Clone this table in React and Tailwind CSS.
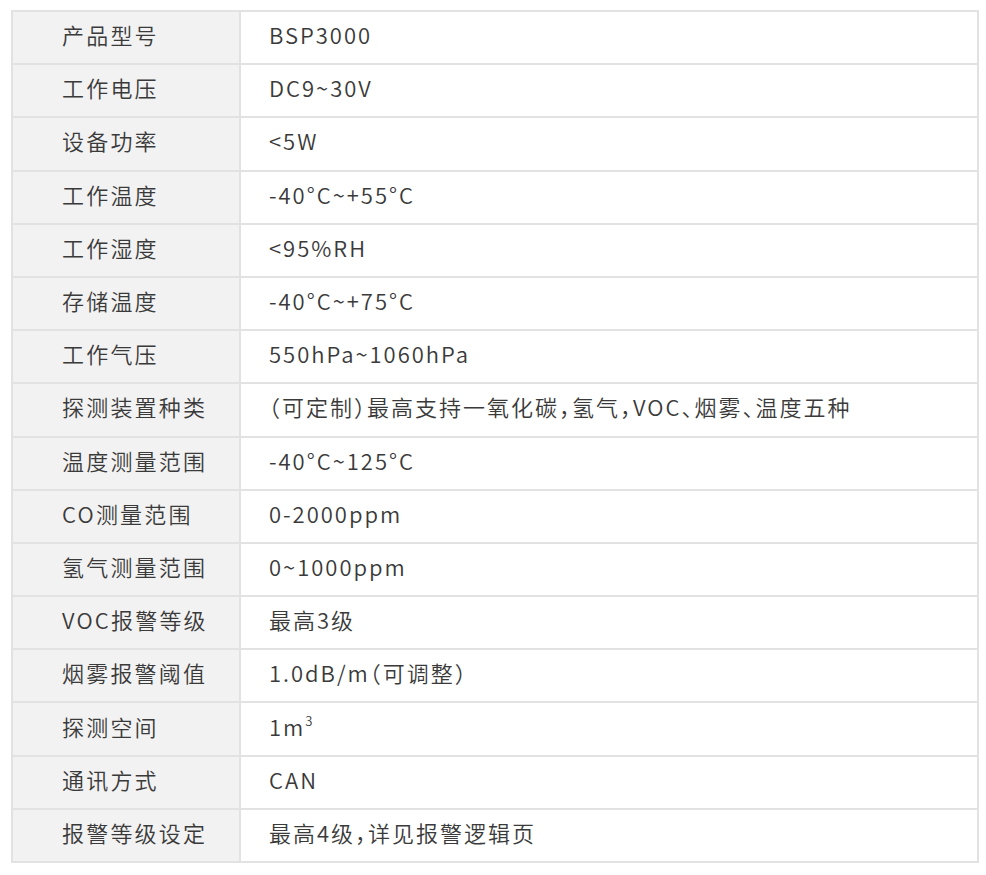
import React from 'react';

const rows = [
  ['产品型号', 'BSP3000'],
  ['工作电压', 'DC9~30V'],
  ['设备功率', '<5W'],
  ['工作温度', '-40°C~+55°C'],
  ['工作湿度', '<95%RH'],
  ['存储温度', '-40°C~+75°C'],
  ['工作气压', '550hPa~1060hPa'],
  ['探测装置种类', '（可定制）最高支持一氧化碳，氢气，VOC、烟雾、温度五种'],
  ['温度测量范围', '-40°C~125°C'],
  ['CO测量范围', '0-2000ppm'],
  ['氢气测量范围', '0~1000ppm'],
  ['VOC报警等级', '最高3级'],
  ['烟雾报警阈值', '1.0dB/m（可调整）'],
  ['探测空间', 'm3'],
  ['通讯方式', 'CAN'],
  ['报警等级设定', '最高4级，详见报警逻辑页'],
];

const App = () => {
  return (
    <div className="bg-white w-[986px] h-[875px] pt-[10px] pl-[11px] [font-feature-settings:'halt']" style={{ fontFamily: '"Noto Sans CJK SC", "Noto Sans", sans-serif' }}>
      <div className="w-[968px] border-2 border-[#e2e2e2] border-b-0">
        {rows.map(([k, v]) => (
          <div key={k} className="flex h-[53.2px] border-b-2 border-[#e2e2e2]">
            <div className="w-[228px] shrink-0 bg-[#f2f2f2] border-r-2 border-[#e2e2e2] flex items-center pl-[49px] pb-[6px] text-[22px] font-[350] tracking-[2.2px] text-[#3a3a3a]">
              {k}
            </div>
            <div className="flex-1 flex items-center pl-[28px] pb-[6px] text-[22px] font-[350] tracking-[2px] text-[#3a3a3a]">
              {v === 'm3' ? (<span>1m<sup className="text-[13px] align-super relative -top-[1px]">3</sup></span>) : v}
            </div>
          </div>
        ))}
      </div>
    </div>
  );
};

export default App;
